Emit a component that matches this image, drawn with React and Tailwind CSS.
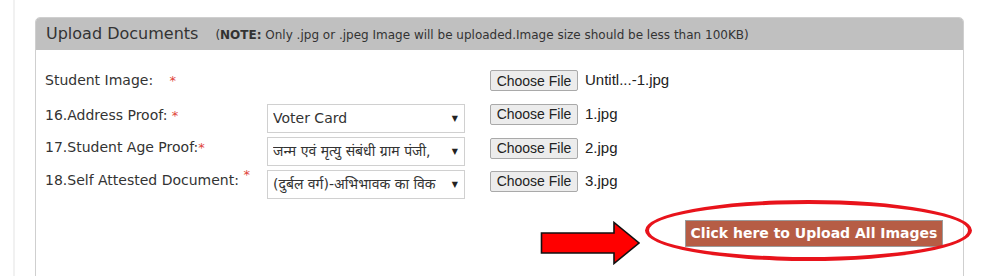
const verdana = { fontFamily: '"DejaVu Sans", Verdana, "Noto Sans", sans-serif' };

function Star({ className = '' }) {
  return <span className={`text-[#e0443a] text-[13px] ${className}`}>*</span>;
}

function FileInput({ name }) {
  return (
    <div className="flex items-center gap-[7px] font-['Liberation_Sans',Arial,sans-serif]">
      <button className="h-[21px] w-[88px] bg-[#ececec] border border-[#a9a9a9] rounded-[2px] text-[14px] text-[#222] leading-none">
        Choose File
      </button>
      <span className="text-[15px] text-[#222]">{name}</span>
    </div>
  );
}

function Select({ value }) {
  return (
    <div className="h-[29px] w-[198px] border border-[#d0d0d0] bg-white flex items-center justify-between pl-[5px] pr-[6px] text-[14px] text-[#333] whitespace-nowrap overflow-hidden">
      <span className="overflow-hidden font-['DejaVu_Sans','Noto_Sans','Noto_Sans_Devanagari','Lohit_Devanagari',sans-serif]">{value}</span>
      <span className="text-[8px] text-[#222] pl-[2px]">▼</span>
    </div>
  );
}

export default function App() {
  return (
    <div className="w-[990px] h-[276px] bg-white overflow-hidden relative" style={verdana}>
      <div className="absolute left-[13px] top-0 bottom-0 w-[2px] bg-[#f1f1f1]" />
      <div className="pt-[17px] pl-[35px] pr-[26px]">
        <div className="border border-[#cfcfcf] rounded-t-[5px] rounded-b-[5px] h-[270px] relative">
          <div className="bg-[#c0c0c0] h-[32px] flex items-center pl-[10px] rounded-t-[4px] text-[#333]">
            <span className="text-[16px]">Upload Documents</span>
            <span className="text-[12px] ml-[17px] pt-[2px]">
              (<b>NOTE:</b> Only .jpg or .jpeg Image will be uploaded.Image size should be less than 100KB)
            </span>
          </div>

          <div className="pl-[9px] pt-[18px] text-[14px] text-[#333]">
            <div className="flex items-center h-[25px]">
              <div className="w-[445px]">
                Student Image: <Star className="ml-[12px]" />
              </div>
              <FileInput name="Untitl...-1.jpg" />
            </div>

            <div className="flex flex-col gap-[4px] mt-[11px]">
              <div className="flex items-start">
                <div className="w-[222px] pt-[1px]">16.Address Proof: <Star /></div>
                <Select value="Voter Card" />
                <div className="ml-[25px] -mt-[1px]"><FileInput name="1.jpg" /></div>
              </div>
              <div className="flex items-start">
                <div className="w-[222px]">17.Student Age Proof:<Star /></div>
                <Select value="जन्म एवं मृत्यु संबंधी ग्राम पंजी," />
                <div className="ml-[25px]"><FileInput name="2.jpg" /></div>
              </div>
              <div className="flex items-start">
                <div className="w-[222px] whitespace-nowrap">18.Self Attested Document: <sup className="text-[#e0443a] text-[13px]">*</sup></div>
                <Select value="(दुर्बल वर्ग)-अभिभावक का विक" />
                <div className="ml-[25px]"><FileInput name="3.jpg" /></div>
              </div>
            </div>

            <div className="flex justify-end pr-[20px] mt-[21px]">
              <button className="relative h-[27px] w-[258px] bg-[#b65d45] border border-[#9c9c9c] text-white font-bold text-[14px]">
                Click here to Upload All Images
                <span className="absolute left-[-41px] right-[-30px] top-[-21px] bottom-[-15px] border-[4px] border-[#e8131b] rounded-[50%] pointer-events-none" />
              </button>
            </div>
          </div>

          <svg className="absolute left-[504px] top-[203px]" width="102" height="44" viewBox="0 0 102 44">
            <path d="M1.5 12 H74 V1.5 L99 22 L74 42.5 V32 H1.5 Z" fill="#ff0000" stroke="#111" strokeWidth="1.6" strokeLinejoin="miter" />
          </svg>
        </div>
      </div>
    </div>
  );
}
